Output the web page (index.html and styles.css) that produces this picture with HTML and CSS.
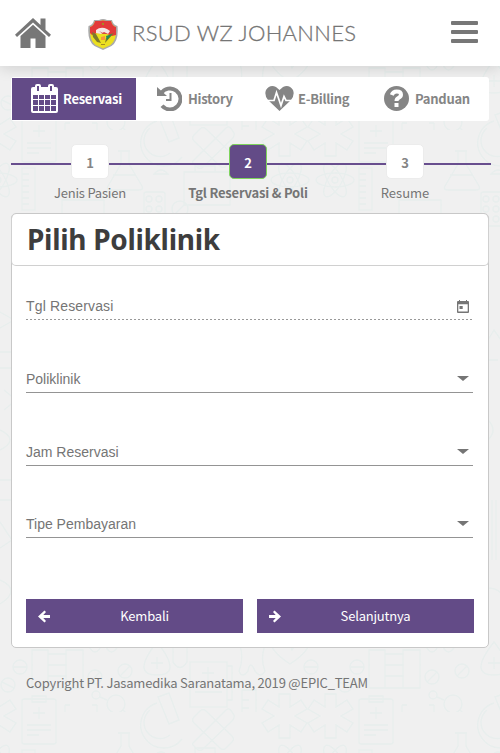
FILE: index.html
```html
<!DOCTYPE html>
<html lang="id">
<head>
<meta charset="utf-8">
<title>RSUD WZ Johannes</title>
<link rel="stylesheet" href="styles.css">
</head>
<body>
<svg class="backdrop" aria-hidden="true">
  <defs>
    <pattern id="medical" width="337" height="582" patternUnits="userSpaceOnUse" y="130">
      <g class="doodle">
        <g id="clip"><rect x="22" y="569" width="34" height="45" rx="2"/><path d="M32 566h14v6H32zM39 577v12M33 583h12M27 595h24M27 600h24M27 605h12"/></g>
        <use href="#clip" y="-582"/>
        <path d="M65 575v24q0 9 16 10q16-1 16-10v-24M65 575h5M92 575h5M81 609v10"/>
        <circle cx="116" cy="574" r="9"/><circle cx="96" cy="565" r="4"/><circle cx="131" cy="588" r="4"/><path d="M100 567l7 3M123 580l5 5"/>
        <g id="scope"><path d="M158 567l11-4l10 27l-10 4zM157 573a23 23 0 1 0 25 36M150 580a16 16 0 0 0 20 25"/></g>
        <use href="#scope" y="-582"/>
        <g id="plaster"><path d="M194 587l6-6q3-3 6 0l26 25q3 3 0 6l-6 6q-3 3-6 0l-26-25q-3-3 0-6zM194 612l32-32q3-3 6 2l2 3q1 3-2 6l-29 28q-3 3-6 0l-3-3q-3-2 0-4z"/></g>
        <use href="#plaster" y="-582"/>
        <g id="star"><path d="M279 564h11v13l11-7l6 9l-12 7l12 7l-6 9l-11-7v13h-11v-13l-11 7l-6-9l12-7l-12-7l6-9l11 7z"/></g>
        <use href="#star" x="46"/><use href="#star" y="-582"/><use href="#star" x="46" y="-582"/><use href="#star" x="-291"/><use href="#star" x="-291" y="-582"/>
        <path d="M242 560h14v25q0 6-7 6q-7 0-7-6zM249 591v17M242 570h7M242 578h7"/>
        <circle cx="264" cy="611" r="7"/><path d="M259 616l10-10"/>
        <path d="M118 21h12M121 22v12l-13 22q-2 4 3 4h28q5 0 3-4l-13-22v-12M113 45h23"/>
        <rect x="22" y="38" width="13" height="42"/><path d="M22 44h7M22 50h7M22 56h7M22 62h7M22 68h7M22 74h7"/>
        <g id="atom"><ellipse cx="290" cy="50" rx="19" ry="7"/><ellipse cx="290" cy="50" rx="19" ry="7" transform="rotate(60 290 50)"/><ellipse cx="290" cy="50" rx="19" ry="7" transform="rotate(120 290 50)"/><circle cx="290" cy="50" r="3"/></g>
        <use href="#atom" x="45"/><use href="#atom" x="-292"/>
        <rect x="144" y="62" width="21" height="34" rx="2"/><circle cx="149" cy="69" r="3"/><circle cx="159" cy="69" r="3"/><circle cx="149" cy="79" r="3"/><circle cx="159" cy="79" r="3"/><circle cx="149" cy="89" r="3"/><circle cx="159" cy="89" r="3"/>
        <path d="M184 42h46v33h-46zM195 42v-6h20v6M62 70h42v20H62zM154 44q7-8 14 0z"/>
        <circle cx="180" cy="79" r="8"/><path d="M174 85l12-12"/>
        <g id="heart"><path d="M290 132q-20-13-20-24q0-9 9-9q7 0 11 7q4-7 11-7q9 0 9 9q0 11-20 24zM274 112h9l4-7l5 13l4-6h9"/></g>
        <use href="#heart" y="402"/>
        <circle cx="20" cy="537" r="7"/><circle cx="8" cy="555" r="7"/><circle cx="95" cy="547" r="7"/><circle cx="125" cy="541" r="7"/><circle cx="311" cy="537" r="7"/><path d="M13 537h14M2 552l12 6M90 552l10-10M120 546l10-10M304 537h14"/>
        <path d="M32 520h16v38h-16zM48 524h18v34h-18zM66 520h17v38h-17zM48 535h18M48 546h18"/>
        <path d="M157 512q-26 33 0 33q26 0 0-33zM157 527v12M151 533h12"/>
        <rect x="190" y="532" width="37" height="45"/><path d="M227 536h5v34h-5M208 537v13M202 543h12M195 562h27"/>
        <path d="M173 512v20q7 11 14 0v-20M86 510q9 24 18 0M103 510q8 24 18 0M240 515q4 14-1 26q3 8 9 0q2-12 7 0q6 8 10 0q-5-12 0-26"/>
        <path d="M0 182l14 8l-14 8M0 222h14v16H0M4 260l12 10l-12 10M0 300q20 10 0 20M0 350h13v20H0M0 392l12 18l-12 8M0 450q22 10 0 24"/>
        <path d="M327 205l10 8M151 210l6-10l7 10M151 230h10M151 290q10 10 0 20M155 370v60M159 370v60M150 458q18 0 18 18"/>
      </g>
    </pattern>
  </defs>
  <rect width="100%" height="100%" fill="url(#medical)"/>
</svg>

<header class="topbar">
  <svg class="home" viewBox="0 0 36 31"><path fill="#777" d="M18 0l7.500 7V.5h5v11.200l5.500 5-2 2.300L18 4.500 2 19 0 16.700zM18 6.800l12.500 11.300V30H20.500V20.500h-5V30H5.500V18.100z"/></svg>
  <div class="brand">
    <svg class="crest" viewBox="0 0 30 31">
      <path d="M6 1h5q4-2 8 0h5q1 5 5.500 6q1.500 15-6 20l-8.500 4-8.500-4q-7.500-5-6-20q4.500-1 5.500-6z" fill="#aaa"/>
      <path d="M7 2h5q3-1 6 0h5q1 5 5 6q1 13-5.500 18l-7.500 3.500-7.500-3.500q-6.500-5-5.500-18q4-1 5-6z" fill="#ece01f"/>
      <path d="M7 2h5q3-1 6 0h5q1 5 5 6v8l-4 1-5-2-10-1-5 2-2-2v-6q4-1 5-6z" fill="#e23a3a"/>
      <path d="M8 11q5-4 11-1l3 2-2 3-4-2-3 2-5-1z" fill="#f5e6e4"/>
      <path d="M11 12l4 2h5l-5 1z" fill="#c84b48"/>
      <path d="M4 13l4 2 5 9-4-1-4-5zM26 14l-9 10 1-5 5-4z" fill="#7d7a2c"/>
      <path d="M18 17l6-2-5 6z" fill="#218d55"/><path d="M13 18l4-1v4h-4z" fill="#f7973c"/><path d="M13 25h4v1h-4zM14 4h2v2h-2z" fill="#a58d22"/>
    </svg>
    <h1 class="brand-name">RSUD WZ JOHANNES</h1>
  </div>
  <span class="menu"><i></i><i></i><i></i></span>
</header>

<nav class="tabs">
  <a class="tab tab-active"><svg class="cal" viewBox="0 0 27 29"><path fill="#fff" fill-rule="evenodd" d="M4 3V2q0-2 2-2h2q2 0 2 2v1h7V2q0-2 2-2h2q2 0 2 2v1h2q2 0 2 2v22q0 2-2 2H2q-2 0-2-2V5q0-2 2-2zM6 2v5h2V2zM19 2v5h2V2zM2 11v4h5v-4zM8 11v4h5v-4zM14 11v4h5v-4zM20 11v4h5v-4zM2 16v5h5v-5zM8 16v5h5v-5zM14 16v5h5v-5zM20 16v5h5v-5zM2 22v5h5v-5zM8 22v5h5v-5zM14 22v5h5v-5zM20 22v5h5v-5z"/></svg><span>Reservasi</span></a>
  <a class="tab t2"><svg class="ic25" viewBox="0 0 25 25"><path fill="none" stroke="#858585" stroke-width="3.900" d="M4 7.500A10.500 10.500 0 1 1 5 19.800"/><path fill="#858585" d="M0 1l10 9H0z"/><path fill="none" stroke="#858585" stroke-width="2" d="M13.500 7v7H9"/></svg><span>History</span></a>
  <a class="tab t3"><svg class="heart" viewBox="0 0 29 25"><path fill="#858585" d="M14.500 25L3 14Q-1 9 1 4Q5-2 11 1l3.500 3L18 1q6-3 10 3q2 5-2 10z"/><path fill="none" stroke="#fff" stroke-width="1.700" d="M2 14.500h7l2.500-8 4.500 13 3-9 2 4h6"/></svg><span>E-Billing</span></a>
  <a class="tab t4"><svg class="ic25" viewBox="0 0 25 25"><circle cx="12.500" cy="12.500" r="12.500" fill="#858585"/><path fill="none" stroke="#fff" stroke-width="4" d="M7.800 9q1.200-3.500 4.900-3.500q4.300 0 4.300 3.300q0 1.700-2.300 2.900q-2.200 1.100-2.200 3.300"/><path fill="#fff" d="M10.500 17h4v4h-4z"/></svg><span>Panduan</span></a>
</nav>

<ol class="steps">
  <li class="step"><b class="num">1</b><span class="step-label">Jenis Pasien</span></li>
  <li class="step current"><b class="num">2</b><span class="step-label">Tgl Reservasi &amp; Poli</span></li>
  <li class="step"><b class="num">3</b><span class="step-label">Resume</span></li>
</ol>

<main class="card">
  <div class="card-head"><h2>Pilih Poliklinik</h2></div>
  <div class="fields">
    <div class="field dotted"><span>Tgl Reservasi</span><svg class="date" viewBox="0 0 12 13"><path fill="#757575" fill-rule="evenodd" d="M2 0h1v1h6V0h1v1h1q1 0 1 1v10q0 1-1 1H1q-1 0-1-1V2q0-1 1-1h1zM1.300 4.300v7.300h9.400V4.300zM2.500 6h3.200v3H2.500z"/></svg></div>
    <div class="field"><span>Poliklinik</span><i class="caret"></i></div>
    <div class="field"><span>Jam Reservasi</span><i class="caret"></i></div>
    <div class="field"><span>Tipe Pembayaran</span><i class="caret"></i></div>
  </div>
  <div class="actions">
    <button class="btn"><svg viewBox="0 0 12 12"><path d="M6.500 0L8 1.500 5.300 4.400H12v3.200H5.300L8 10.500 6.500 12 0 6z"/></svg><span>Kembali</span></button>
    <button class="btn"><svg class="flip" viewBox="0 0 12 12"><path d="M6.500 0L8 1.500 5.300 4.400H12v3.200H5.300L8 10.500 6.500 12 0 6z"/></svg><span>Selanjutnya</span></button>
  </div>
</main>
<footer>Copyright PT. Jasamedika Saranatama, 2019 @EPIC_TEAM</footer>
</body>
</html>
```
FILE: styles.css
```css
* { box-sizing: border-box; }
body {
  margin: 0;
  height: 753px;
  overflow: hidden;
  background: #f0f0f0;
  color: #757575;
  font: 13px/20px "Noto Sans CJK JP", "Noto Sans", sans-serif;
  letter-spacing: -.2px;
}
.backdrop { position: absolute; inset: 0; width: 100%; height: 753px; z-index: -1; }
.doodle { fill: none; stroke: #e8eeed; stroke-width: 1.4; }
.topbar {
  height: 66px;
  display: flex;
  align-items: center;
  padding: 0 22px 0 15px;
  background: #fff;
  box-shadow: 0 2px 14px rgba(0, 0, 0, .14);
}
.home { width: 36px; height: 31px; }
.brand { display: flex; align-items: center; margin-left: 37px; }
.crest { width: 30px; height: 31px; margin-top: 2px; }
.brand-name {
  margin: 0 0 0 14px;
  font: 300 22px/30px Lato, sans-serif;
  letter-spacing: .3px;
  -webkit-text-stroke: .3px #757575;
  white-space: nowrap;
}
.menu { display: grid; gap: 5px; margin: -2px 0 0 auto; width: 27px; }
.menu i { height: 4px; border-radius: 1px; background: #777; }
.tabs {
  display: grid;
  grid-template-columns: 125px 115px 118px 1fr;
  width: 478px;
  height: 44px;
  margin: 11px 0 0 11px;
  background: #fff;
  border-radius: 3px;
}
.tab {
  display: flex;
  align-items: center;
  color: #858585;
  font-weight: 700;
  letter-spacing: -.28px;
  white-space: nowrap;
}
.tab-active { margin: 1px 0 1px 1px; padding-left: 19px; background: #634b87; color: #fff; }
.cal { width: 27px; height: 29px; margin: -2px 5px 0 0; }
.ic25 { width: 25px; height: 25px; margin: -1px 6px 0 0; }
.heart { width: 29px; height: 25px; margin: -1px 4px 0 0; }
.t2 { padding-left: 21px; }
.t3 { padding-left: 14px; }
.t4 { padding-left: 15px; }
.steps {
  display: grid;
  grid-template-columns: repeat(3, 1fr);
  list-style: none;
  margin: 22px 15px 0 11px;
  padding: 0;
  width: 480px;
  height: 69px;
  background: linear-gradient(#684e8e, #684e8e) 0 20px / 100% 2px no-repeat;
}
.step { width: 158px; display: flex; flex-direction: column; align-items: center; }
.step:nth-child(2) { margin-left: -2px; }
.step:nth-child(3) { margin-left: -5px; }
.step:nth-child(3) .step-label { letter-spacing: 0; }
.num {
  width: 38px;
  height: 35px;
  margin-top: 1px;
  border: 1px solid #ececec;
  border-radius: 5px;
  background: #fff;
  color: #858585;
  text-align: center;
  line-height: 35px;
}
.step-label { margin-top: 4px; line-height: 20px; white-space: nowrap; }
.current .num { background: #634b87; border-color: #7ed35b; color: #fff; }
.current .step-label { font-weight: 700; }
.card {
  width: 478px;
  height: 435px;
  margin: 1px 0 0 11px;
  border: 1px solid #c8c8c8;
  border-radius: 5px;
  background: #fff;
}
.card-head {
  height: 52px;
  margin: 0 -1px;
  padding-left: 15px;
  border: solid #d0d0d0;
  border-width: 0 1px 1px;
  border-radius: 5px;
}
h2 {
  margin: 0;
  color: #3d3d3d;
  font: 700 28px/51px "Noto Sans", sans-serif;
  letter-spacing: -.3px;
  white-space: nowrap;
}
.fields { padding: 25px 15px 0 14px; }
.field {
  display: flex;
  align-items: center;
  justify-content: space-between;
  height: 29px;
  padding-top: 2px;
  margin-bottom: 44px;
  border-bottom: 1px solid #949494;
  font: 14px/20px "Liberation Sans", sans-serif;
  letter-spacing: 0;
}
.field:nth-child(3) { margin-bottom: 43px; }
.dotted {
  border-bottom-color: transparent;
  background: repeating-linear-gradient(90deg, #999 0 2px, transparent 2px 4px) 0 100% / 100% 1px no-repeat border-box;
}
.dotted span { letter-spacing: .15px; }
.date { width: 12px; height: 13px; margin-right: 4px; }
.caret {
  margin: -1px 4px 0 0;
  border: solid transparent;
  border-width: 5px 6px 0;
  border-top-color: #757575;
}
.actions { display: grid; grid-template-columns: 217px 217px; gap: 14px; padding: 17px 14px 0; }
.btn {
  display: flex;
  align-items: center;
  height: 34px;
  padding: 0 10px 0 12px;
  border: 0;
  background: #634b87;
  color: #fff;
  font: inherit;
  letter-spacing: inherit;
}
.btn svg { width: 12px; height: 13px; fill: #fff; }
.flip { transform: scaleX(-1); }
.btn span { flex: 1; padding-left: 6px; text-align: center; }
footer { margin: 25px 0 0 26px; white-space: nowrap; }
```
